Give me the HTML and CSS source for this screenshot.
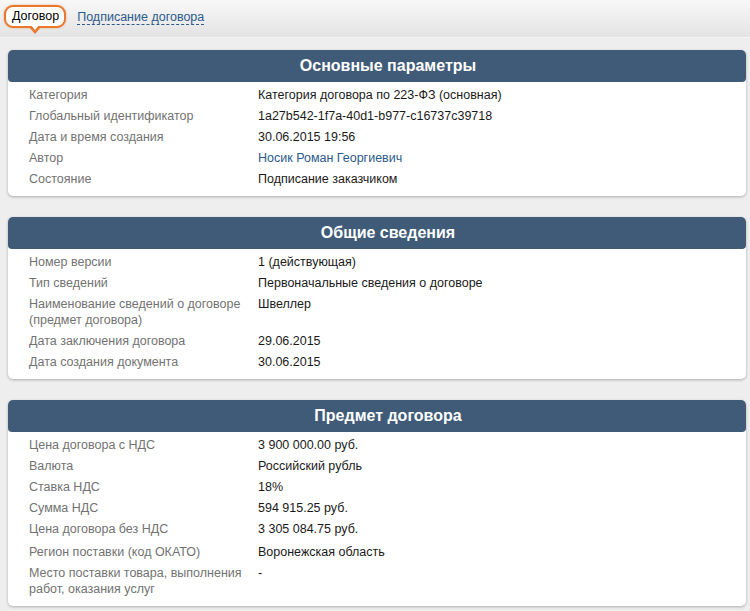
FILE: index.html
```html
<!DOCTYPE html>
<html lang="ru">
<head>
<meta charset="utf-8">
<title>Договор</title>
<link rel="stylesheet" href="styles.css">
</head>
<body>
<div class="topbar">
  <span class="tab tab-active">Договор</span>
  <a class="tab-link" href="#">Подписание договора</a>
</div>
<main class="content">
  <section class="card">
    <h2 class="card-title">Основные параметры</h2>
    <div class="card-body">
      <div class="row"><div class="label">Категория</div><div class="value">Категория договора по 223-ФЗ (основная)</div></div>
      <div class="row"><div class="label">Глобальный идентификатор</div><div class="value">1a27b542-1f7a-40d1-b977-c16737c39718</div></div>
      <div class="row"><div class="label">Дата и время создания</div><div class="value">30.06.2015 19:56</div></div>
      <div class="row"><div class="label">Автор</div><div class="value"><a class="value-link" href="#">Носик Роман Георгиевич</a></div></div>
      <div class="row"><div class="label">Состояние</div><div class="value">Подписание заказчиком</div></div>
    </div>
  </section>
  <section class="card">
    <h2 class="card-title">Общие сведения</h2>
    <div class="card-body">
      <div class="row"><div class="label">Номер версии</div><div class="value">1 (действующая)</div></div>
      <div class="row"><div class="label">Тип сведений</div><div class="value">Первоначальные сведения о договоре</div></div>
      <div class="row"><div class="label">Наименование сведений о договоре (предмет договора)</div><div class="value">Швеллер</div></div>
      <div class="row"><div class="label">Дата заключения договора</div><div class="value">29.06.2015</div></div>
      <div class="row"><div class="label">Дата создания документа</div><div class="value">30.06.2015</div></div>
    </div>
  </section>
  <section class="card">
    <h2 class="card-title">Предмет договора</h2>
    <div class="card-body">
      <div class="row"><div class="label">Цена договора с НДС</div><div class="value">3 900 000.00 руб.</div></div>
      <div class="row"><div class="label">Валюта</div><div class="value">Российский рубль</div></div>
      <div class="row"><div class="label">Ставка НДС</div><div class="value">18%</div></div>
      <div class="row"><div class="label">Сумма НДС</div><div class="value">594 915.25 руб.</div></div>
      <div class="row"><div class="label">Цена договора без НДС</div><div class="value">3 305 084.75 руб.</div></div>
      <div class="row row-spaced"><div class="label">Регион поставки (код ОКАТО)</div><div class="value">Воронежская область</div></div>
      <div class="row"><div class="label">Место поставки товара, выполнения работ, оказания услуг</div><div class="value">-</div></div>
    </div>
  </section>
</main>
</body>
</html>
```
FILE: styles.css
```css
html, body {
  margin: 0;
  padding: 0;
}
body {
  background: #eeeeee;
  font-family: "Liberation Sans", Arial, sans-serif;
  font-size: 12.5px;
  color: #1a1a1a;
}
.topbar {
  height: 38px;
  box-sizing: border-box;
  padding: 5px 0 0 4px;
  display: flex;
  align-items: flex-start;
  gap: 11px;
  background: linear-gradient(#f8f8f8, #e3e3e3);
  border-bottom: 1px solid #f2f2f2;
}
.tab {
  position: relative;
  display: inline-block;
  height: 19px;
  line-height: 19px;
  padding: 0 5px 0 6px;
  background: #ffffff;
  border: 2px solid #e9782f;
  border-radius: 9px;
  color: #000;
  box-shadow: 0 0 2px rgba(233, 120, 47, 0.6);
}
.tab-active::before {
  content: "";
  position: absolute;
  left: 23px;
  bottom: -8px;
  border-left: 6px solid transparent;
  border-right: 6px solid transparent;
  border-top: 7px solid #e9782f;
}
.tab-active::after {
  content: "";
  position: absolute;
  left: 25px;
  bottom: -4px;
  border-left: 4px solid transparent;
  border-right: 4px solid transparent;
  border-top: 5px solid #ffffff;
}
.tab-link {
  margin-top: 5px;
  color: #2c5a8c;
  text-decoration: none;
  border-bottom: 1px dashed #2c5a8c;
  line-height: 14px;
}
.content {
  padding: 12px 4px 6px 8px;
  display: flex;
  flex-direction: column;
  gap: 21px;
}
.card {
  background: #ffffff;
  border-radius: 5px;
  box-shadow: 0 1px 3px rgba(0, 0, 0, 0.28);
}
.card-title {
  margin: 0;
  height: 32px;
  line-height: 32px;
  padding-left: 22px;
  background: #405b78;
  border-radius: 5px 5px 4px 4px;
  color: #ffffff;
  font-size: 16px;
  font-weight: bold;
  text-align: center;
}
.card-body {
  padding: 3px 0 6px 21px;
}
.row {
  display: grid;
  grid-template-columns: 229px 1fr;
  padding: 2px 0 3px;
  line-height: 16px;
}
.row-spaced {
  padding-top: 4px;
}
.label {
  color: #727272;
  padding-right: 6px;
}
.value {
  color: #1a1a1a;
}
.value-link {
  color: #2c5a8c;
  text-decoration: none;
}
```
